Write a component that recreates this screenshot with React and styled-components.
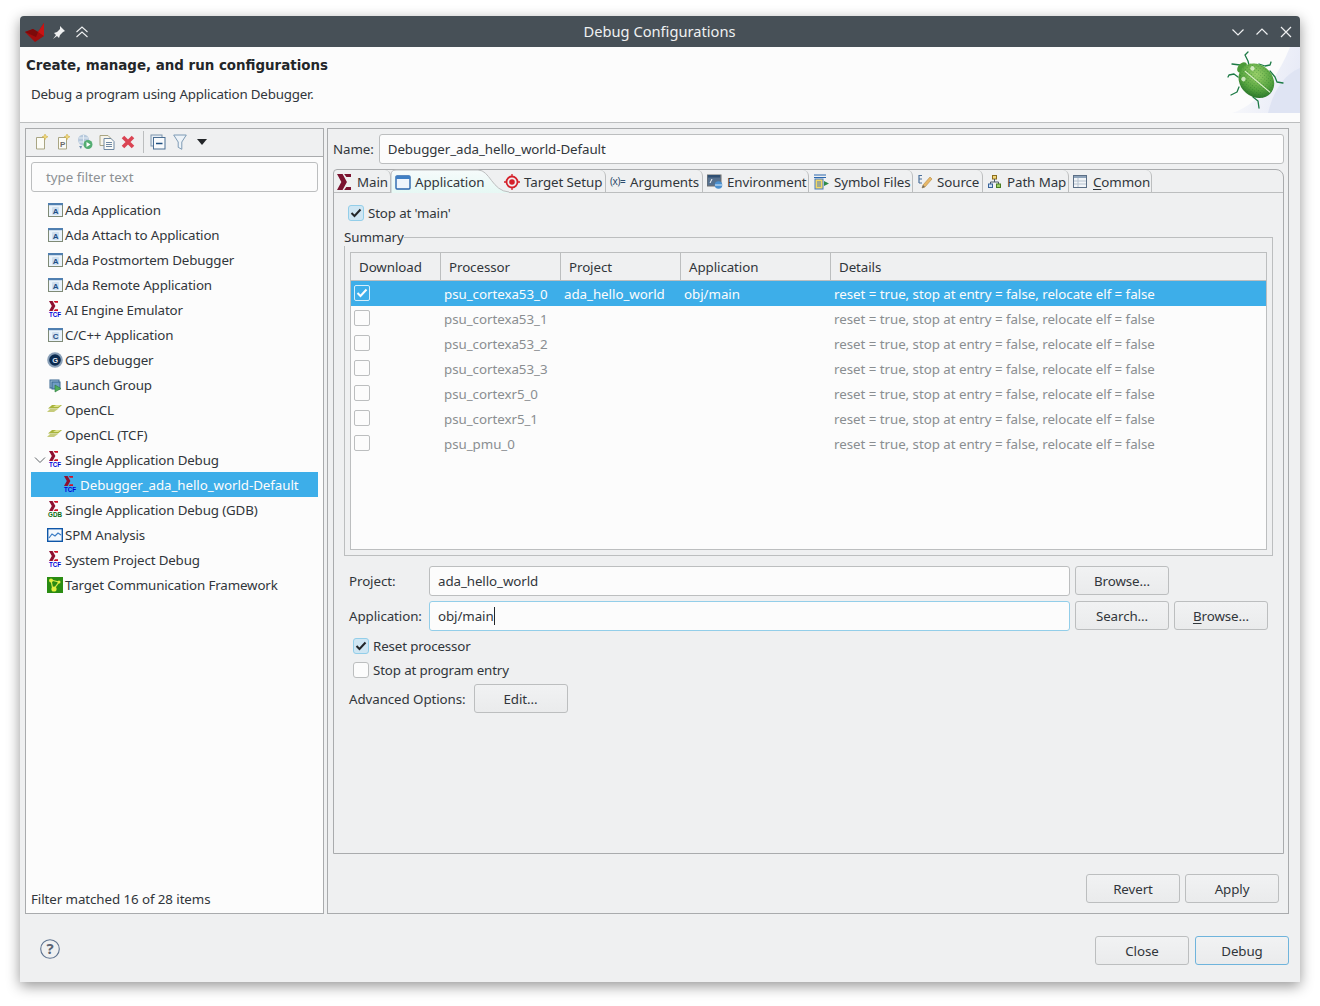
import React from "react";
import styled, { createGlobalStyle } from "styled-components";

const GlobalStyle = createGlobalStyle`
  html, body {
    margin: 0;
    height: 100%;
    overflow: hidden;
    background: #fff;
  }
  body {
    font-family: "Noto Sans", "Open Sans", sans-serif;
    font-size: 13.33px;
    letter-spacing: -0.08px;
    color: #31363b;
  }
  * { box-sizing: border-box; }
`;

const Page = styled.div`
  padding: 16px 20px 0;
`;

const Win = styled.div`
  width: 1280px;
  height: 966px;
  display: flex;
  flex-direction: column;
  background: #eff0f1;
  border-radius: 4px 4px 0 0;
  box-shadow: 0 4px 14px rgba(0, 0, 0, 0.42);
`;

const TitleBar = styled.div`
  height: 31px;
  flex: none;
  display: flex;
  align-items: center;
  background: #475057;
  border-radius: 4px 4px 0 0;
  padding: 0 6px 0 5px;
  color: #eff0f1;
  font-size: 14.67px;
  letter-spacing: 0;
`;

const TitleLeft = styled.div`
  width: 240px;
  display: flex;
  align-items: center;
  gap: 5px;
`;

const TitleText = styled.div`
  flex: 1;
  text-align: center;
  padding-bottom: 2px;
`;

const TitleRight = styled.div`
  width: 240px;
  display: flex;
  justify-content: flex-end;
  align-items: center;
  gap: 8px;
`;

const Header = styled.div`
  height: 76px;
  flex: none;
  background: #fcfcfc;
  border-bottom: 1px solid #bcbebf;
  display: flex;
  justify-content: space-between;
`;

const HeaderText = styled.div`
  padding: 9px 0 0 6px;
`;

const HeaderTitle = styled.div`
  font-family: "DejaVu Sans", sans-serif;
  font-weight: 700;
  font-size: 13.4px;
  letter-spacing: 0;
  line-height: 20px;
  color: #232629;
`;

const HeaderDesc = styled.div`
  margin: 8px 0 0 5px;
  line-height: 20px;
  letter-spacing: -0.19px;
  color: #31363b;
`;

const Body = styled.div`
  flex: 1;
  min-height: 0;
  display: flex;
  gap: 3px;
  padding: 5px 11px 0 5px;
`;

const LeftPanel = styled.div`
  width: 299px;
  flex: none;
  display: flex;
  flex-direction: column;
  background: #fcfcfc;
  border: 1px solid #a9abad;
`;

const Toolbar = styled.div`
  height: 28px;
  flex: none;
  display: flex;
  align-items: center;
  gap: 5.5px;
  padding: 0 0 1px 8px;
  background: #eff0f1;
  border-bottom: 1px solid #a9abad;
`;

const ToolSep = styled.div`
  width: 1px;
  height: 22px;
  background: #bcbebf;
  margin: 0 1px;
`;

const FilterBox = styled.div`
  height: 30px;
  flex: none;
  margin: 5px 5px 5px;
  padding: 0 14px;
  display: flex;
  align-items: center;
  background: #fcfcfc;
  border: 1px solid #bcbebf;
  border-radius: 3px;
  letter-spacing: 0;
  color: #8d9194;
`;

const Tree = styled.div`
  flex: 1;
  padding: 0 5px;
`;

const TreeRow = styled.div`
  height: 25px;
  display: flex;
  align-items: center;
  gap: 2px;
  position: relative;
  padding-left: ${(p) => 16 + p.$depth * 15}px;
  letter-spacing: ${(p) => (p.$selected ? -0.06 : -0.14)}px;
  background: ${(p) => (p.$selected ? "#3daee9" : "transparent")};
  color: ${(p) => (p.$selected ? "#fcfcfc" : "#31363b")};
  & > svg:first-child { flex: none; }
`;

const Twisty = styled.span`
  position: absolute;
  left: 3px;
  top: 7px;
  display: flex;
`;

const FilterCount = styled.div`
  padding: 0 5px;
  height: 26px;
  flex: none;
  line-height: 24px;
`;

const RightPanel = styled.div`
  flex: 1;
  min-width: 0;
  display: flex;
  flex-direction: column;
  border: 1px solid #a9abad;
  padding: 5px 4px 10px 5px;
`;

const NameRow = styled.div`
  display: flex;
  align-items: center;
  gap: 5px;
  height: 30px;
  flex: none;
`;

const TextBox = styled.div`
  height: 30px;
  flex: 1;
  min-width: 0;
  display: flex;
  align-items: center;
  padding: 0 8px;
  background: #fcfcfc;
  border: 1px solid ${(p) => (p.$focus ? "#93cee9" : "#bcbebf")};
  border-radius: 3px;
  color: #31363b;
`;

const Caret = styled.span`
  width: 1px;
  height: 18px;
  background: #232629;
`;

const Folder = styled.div`
  flex: 1;
  min-height: 0;
  margin-top: 5px;
  display: flex;
  flex-direction: column;
  border: 1px solid #a9abad;
  border-radius: 4px 8px 0 0;
`;

const TabStrip = styled.div`
  height: 23px;
  flex: none;
  display: flex;
  border-bottom: 1px solid #bcbebf;
`;

const Tab = styled.div`
  width: ${(p) => p.$w}px;
  flex: none;
  position: relative;
  display: flex;
  align-items: center;
  gap: 4px;
  padding-left: ${(p) => p.$pad}px;
  padding-top: 2px;
  white-space: nowrap;
  border-right: ${(p) => (p.$plain ? "none" : "1px solid #bcbebf")};
  border-top-right-radius: 6px;
  & > * { position: relative; }
  & > svg { flex: none; }
`;

const TabShape = styled.svg`
  position: absolute !important;
  left: -1px;
  top: -1px;
  width: 122px;
  height: 24px;
`;

const Underlined = styled.span`
  text-decoration: underline;
  text-underline-offset: 2px;
`;

const Pane = styled.div`
  flex: 1;
  min-height: 0;
  padding: 8px 10px 0;
`;

const CheckRow = styled.label`
  height: 24px;
  display: flex;
  align-items: center;
  gap: 4px;
  margin-left: 4px;
  letter-spacing: -0.14px;
`;

const Box = styled.span`
  width: 16px;
  height: 16px;
  flex: none;
  display: flex;
  align-items: center;
  justify-content: center;
  border-radius: 3px;
  border: 1px solid ${(p) => (p.$on ? "#93cee9" : "#bcbebf")};
  background: ${(p) => (p.$on ? "#cfe6f3" : "#fcfcfc")};
`;

const Group = styled.fieldset`
  margin: 3px 0 0;
  padding: 6px 5px 5px;
  border: 1px solid #bcbebf;
  height: 328px;
  min-width: 0;
`;

const Legend = styled.legend`
  margin-left: -6px;
  padding: 0;
  line-height: 18px;
`;

const Table = styled.div`
  height: 298px;
  background: #fcfcfc;
  border: 1px solid #bcbebf;
`;

const Columns = "90px 120px 120px 150px 1fr";

const HeadRow = styled.div`
  display: grid;
  grid-template-columns: ${Columns};
  height: 28px;
  border-bottom: 1px solid #bcbebf;
  background: #eff0f1;
`;

const HeadCell = styled.div`
  display: flex;
  align-items: center;
  padding-left: 8px;
  border-right: ${(p) => (p.$last ? "none" : "1px solid #bcbebf")};
`;

const DataRow = styled.div`
  display: grid;
  grid-template-columns: ${Columns};
  height: 25px;
  letter-spacing: -0.04px;
  background: ${(p) => (p.$selected ? "#3daee9" : "transparent")};
  color: ${(p) => (p.$selected ? "#fcfcfc" : "#8a8e91")};
`;

const DataCell = styled.div`
  display: flex;
  align-items: center;
  padding-left: 3px;
`;

const CellBox = styled.span`
  width: 16px;
  height: 16px;
  display: flex;
  align-items: center;
  justify-content: center;
  border-radius: 2px;
  border: 1px solid ${(p) => (p.$on ? "#d4eefb" : "#bcbebf")};
  margin-top: -2px;
`;

const FormGrid = styled.div`
  display: grid;
  grid-template-columns: 75px 641px 94px 94px;
  column-gap: 5px;
  row-gap: 5px;
  margin: 10px 0 0;
  padding: 0 5px;
  align-items: center;
`;

const Btn = styled.div`
  width: 94px;
  height: 29px;
  flex: none;
  align-self: start;
  display: flex;
  align-items: center;
  justify-content: center;
  background: linear-gradient(#f1f2f3, #eaebec);
  border: 1px solid ${(p) => (p.$def ? "#6fb4dc" : "#bcbebf")};
  border-radius: 3px;
  color: #31363b;
`;

const Checks = styled.div`
  margin: 3px 0 0 5px;
`;

const AdvancedRow = styled.div`
  display: flex;
  align-items: center;
  gap: 8px;
  margin: 2px 0 0 5px;
`;

const PanelButtons = styled.div`
  display: flex;
  justify-content: flex-end;
  gap: 5px;
  flex: none;
  margin-top: 20px;
  padding-right: 5px;
`;

const BottomBar = styled.div`
  height: 68px;
  flex: none;
  display: flex;
  align-items: flex-start;
  justify-content: space-between;
  padding: 22px 11px 0 20px;
`;

const HelpWrap = styled.div`
  display: flex;
  padding-top: 3px;
`;

const BottomButtons = styled.div`
  display: flex;
  gap: 6px;
`;

const Svg = ({ w = 16, h = 16, vb, children }) => (
  <svg width={w} height={h} viewBox={vb || `0 0 ${w} ${h}`} fill="none">{children}</svg>
);

const CHEVRON = "M0 0h3.6L6.4 5 3.6 10H0l2.8-5z";
const TIPS = "M4.6 0H9V1.8H6zM4.6 10H9V8.2H6z";

const Tiny = styled.text`
  font-family: "Liberation Sans", sans-serif;
  font-weight: 700;
  font-size: ${(p) => p.$size || 7}px;
  letter-spacing: 0;
`;

const SigmaMark = () => (
  <g transform="translate(2 0)">
    <path d={CHEVRON} fill="#8e1030" />
    <path d={TIPS} fill="#d01028" />
  </g>
);

const TcfIcon = () => (
  <Svg w={16} h={18}>
    <SigmaMark />
    <Tiny x="2" y="16" fill="#0000d8" textLength="12" lengthAdjust="spacingAndGlyphs">TCF</Tiny>
  </Svg>
);

const GdbIcon = () => (
  <Svg w={16} h={18}>
    <SigmaMark />
    <Tiny x="1" y="16" fill="#0b6b10" textLength="14" lengthAdjust="spacingAndGlyphs">GDB</Tiny>
  </Svg>
);

const LetterWin = ({ l }) => (
  <Svg>
    <rect x="1.5" y="1.5" width="14" height="13" fill="#eaf3fb" stroke="#7f8a76" />
    <rect x="1" y="1" width="15" height="2.2" fill="#4f7fb0" />
    <rect x="5" y="5" width="7" height="8" rx="1" fill="#cfdfee" />
    <Tiny x="5.7" y="11.8" $size={8} fill="#1d4d86">{l}</Tiny>
  </Svg>
);

const GpsIcon = () => (
  <Svg>
    <circle cx="8" cy="8" r="7.8" fill="#8aa0b8" />
    <circle cx="8" cy="8" r="5.8" fill="#0a2a50" />
    <Tiny x="5.2" y="10.6" $size={7.5} fill="#e8eef5">G</Tiny>
  </Svg>
);

const LaunchIcon = () => (
  <Svg>
    <rect x="3" y="3" width="9" height="8" fill="#9fc0dc" stroke="#39678f" />
    <rect x="5" y="5" width="8" height="7" fill="#6f9cc4" stroke="#39678f" />
    <path d="M8 8v7l6-3.5z" fill="#4eae5c" stroke="#2c7a3b" strokeWidth=".6" />
  </Svg>
);

const OpenClIcon = () => (
  <Svg>
    <path d="M5 3h10l-4 3.5H1z" fill="#a8b43c" />
    <path d="M3 7h8l-4 3H0z" fill="#c6cb7b" />
    <path d="M9 3h5l-3 2H6z" fill="#dfe38f" />
  </Svg>
);

const SpmIcon = () => (
  <Svg>
    <rect x=".7" y="1.7" width="14.6" height="12.6" fill="#f4f8fd" stroke="#0e56a8" strokeWidth="1.4" />
    <path d="M2 11l3-4 3 2 3-3 3 2" stroke="#3b7cc4" strokeWidth="1.2" />
  </Svg>
);

const TcfFrameworkIcon = () => (
  <Svg>
    <rect width="16" height="16" fill="#2a8c12" />
    <path d="M4 3l8 2-6 8zM4 3l2 10" stroke="#d9e84a" strokeWidth="1.2" />
    <circle cx="4" cy="3.5" r="2" fill="#e3ee3f" />
    <circle cx="12" cy="5" r="1.5" fill="#e3ee3f" />
    <circle cx="7" cy="12" r="2.6" fill="#e3ee3f" />
  </Svg>
);

const ICONS = {
  a: <LetterWin l="A" />,
  c: <LetterWin l="C" />,
  tcf: <TcfIcon />,
  gdb: <GdbIcon />,
  gps: <GpsIcon />,
  launch: <LaunchIcon />,
  opencl: <OpenClIcon />,
  spm: <SpmIcon />,
  fw: <TcfFrameworkIcon />
};

const treeItems = [
  ["a", "Ada Application"],
  ["a", "Ada Attach to Application"],
  ["a", "Ada Postmortem Debugger"],
  ["a", "Ada Remote Application"],
  ["tcf", "AI Engine Emulator"],
  ["c", "C/C++ Application"],
  ["gps", "GPS debugger"],
  ["launch", "Launch Group"],
  ["opencl", "OpenCL"],
  ["opencl", "OpenCL (TCF)"],
  ["tcf", "Single Application Debug", { open: true }],
  ["tcf", "Debugger_ada_hello_world-Default", { depth: 1, selected: true }],
  ["gdb", "Single Application Debug (GDB)"],
  ["spm", "SPM Analysis"],
  ["tcf", "System Project Debug"],
  ["fw", "Target Communication Framework"]
];

const details = "reset = true, stop at entry = false, relocate elf = false";
const procs = ["psu_cortexa53_0", "psu_cortexa53_1", "psu_cortexa53_2", "psu_cortexa53_3", "psu_cortexr5_0", "psu_cortexr5_1", "psu_pmu_0"];

const Check = ({ c = "#232629" }) => (
  <svg width="12" height="10" viewBox="0 0 12 10" fill="none">
    <path d="M1.5 5l3 3 6-6.5" stroke={c} strokeWidth="2" />
  </svg>
);

const CheckBox = ({ on, children }) => (
  <CheckRow>
    <Box $on={on}>{on && <Check />}</Box>
    {children}
  </CheckRow>
);

const ToolDoc = ({ p }) => (
  <Svg>
    <path d="M2.5 3.5h8v11.5h-8z" fill="#fcfcf6" stroke="#a9a583" />
    {p && <Tiny x="4" y="13" $size={8} fill="#6b6b6b">P</Tiny>}
    <path d="M11 0l1 2 2 .8-2 .9-1 2-.9-2-2-.9 2-.8z" fill="#efd77a" stroke="#c9a93f" strokeWidth=".5" />
  </Svg>
);

const ToolRun = () => (
  <Svg>
    <circle cx="6.5" cy="6" r="5.5" fill="#b7c9dc" />
    <path d="M2 4h9M2 8h9M6.5 1v10" stroke="#e6eef6" />
    <circle cx="11" cy="10.5" r="4.5" fill="#54ad72" />
    <path d="M9.5 8l4 2.5-4 2.5z" fill="#fff" />
    <path d="M2 12l2 3 1-3z" fill="#6f8fb0" />
  </Svg>
);

const ToolCopy = () => (
  <Svg>
    <path d="M1 1.5h8l3 3v7H1z" fill="#f7f4ea" stroke="#a9a583" />
    <path d="M5 4.5h7l3 3v8H5z" fill="#fbfbf7" stroke="#6f88a3" />
    <path d="M7 8.5h6M7 10.5h6M7 12.5h6" stroke="#6f88a3" />
  </Svg>
);

const ToolDelete = () => (
  <Svg>
    <path d="M3 3l10 10M13 3L3 13" stroke="#da4453" strokeWidth="3.6" />
  </Svg>
);

const ToolCollapse = () => (
  <Svg>
    <rect x="1" y="1" width="11" height="11" fill="#e7eef5" stroke="#7d93ab" />
    <rect x="3.5" y="3.5" width="11.5" height="11.5" fill="#f8fafc" stroke="#4a6e93" />
    <path d="M6 9.5h6.5" stroke="#1f4f80" strokeWidth="1.5" />
  </Svg>
);

const FunnelSlot = styled.span`
  display: flex;
  margin-left: 1px;
`;

const ToolFilter = () => (
  <FunnelSlot>
    <Svg w={14} h={16}>
      <path d="M.7 1h12.6L8.8 8v7.3l-3.6-2V8z" fill="#edf3f8" stroke="#7d9ab4" />
    </Svg>
  </FunnelSlot>
);

const TabX = () => (
  <svg width="16" height="16" viewBox="0 0 10.3 10" fill="none" preserveAspectRatio="none">
    <path d={CHEVRON} fill="#7a1330" />
    <path d={TIPS} fill="#7a1330" />
  </svg>
);

const TabWindow = () => (
  <Svg>
    <rect x="1" y="2" width="14" height="13" rx="1" fill="#eef5fc" stroke="#2a66ad" strokeWidth="1.4" />
    <rect x="1" y="2" width="14" height="3" fill="#3f7fc4" />
  </Svg>
);

const TabTarget = () => (
  <Svg>
    <circle cx="8" cy="8" r="5.5" stroke="#d5202a" strokeWidth="1.8" />
    <circle cx="8" cy="8" r="2.8" fill="#d5202a" />
    <path d="M8 0v3M8 13v3M0 8h3M13 8h3" stroke="#d5202a" strokeWidth="1.3" />
  </Svg>
);

const ArgsGlyph = styled.span`
  width: 16px;
  flex: none;
  font-size: 10px;
  line-height: 12px;
  margin-top: -3px;
  color: #2c4a6b;
  white-space: nowrap;
  letter-spacing: -0.4px;
`;

const TabEnv = () => (
  <Svg>
    <rect x="0" y="1" width="14" height="11" fill="#56718f" stroke="#6c6c6c" />
    <rect x="1" y="1" width="12" height="2.5" fill="#2f4f72" />
    <path d="M3 9l2-4" stroke="#fff" />
    <circle cx="11.5" cy="11" r="3.8" fill="#4a90d0" />
    <path d="M8 11h7" stroke="#dfeefa" />
  </Svg>
);

const TabSymbols = () => (
  <Svg>
    <path d="M0 1h12M0 3.5h12" stroke="#2a66ad" />
    <rect x="1" y="5" width="8" height="10" fill="#f4d866" stroke="#4a7cc0" />
    <path d="M3 8h4M3 10h4M3 12h4" stroke="#4a7cc0" />
    <path d="M10 8v2H8.6h1.4v2l5-2.5-5-2.5z" fill="#2e8b4a" />
  </Svg>
);

const TabSource = () => (
  <Svg>
    <path d="M2 1.5h3M2 1v8M2 5h3M2 9h3" stroke="#4a6f9a" strokeWidth="1.2" />
    <path d="M5 14l1-3 7-8 2 2-7 8z" fill="#e8b869" stroke="#b5893e" strokeWidth=".6" />
    <path d="M5 14l1-3 2 2z" fill="#6b6b6b" />
  </Svg>
);

const TabPath = () => (
  <Svg>
    <rect x="5.5" y="1.5" width="4" height="3.5" fill="#f3d77a" stroke="#8a6d1e" />
    <path d="M7.5 5v3M3.5 10V8h8v2" stroke="#4a5a6b" />
    <rect x="1.5" y="10" width="4" height="3.5" fill="#cfe0f4" stroke="#38639a" />
    <rect x="9.5" y="10" width="4" height="3.5" fill="#9bd06a" stroke="#4a7d22" />
  </Svg>
);

const TabCommon = () => (
  <Svg>
    <rect x=".5" y="1.5" width="13" height="12" fill="#f2f5f8" stroke="#5c6f86" />
    <rect x="1" y="2" width="12" height="2" fill="#8ea3ba" />
    <path d="M1 7h12M1 10h12M5 4v9" stroke="#b6c2cf" />
  </Svg>
);

const BugLogo = () => (
  <svg width="76" height="66" viewBox="0 0 76 66" fill="none">
    <defs>
      <linearGradient id="swoosh" x1="0" y1="0" x2="1" y2=".3">
        <stop offset="0" stopColor="#fcfcfc" />
        <stop offset="1" stopColor="#e8ebf7" />
      </linearGradient>
      <radialGradient id="shell" cx=".4" cy=".35" r=".75">
        <stop offset="0" stopColor="#9ad06a" />
        <stop offset=".6" stopColor="#55a33e" />
        <stop offset="1" stopColor="#1f6b26" />
      </radialGradient>
      <pattern id="pits" width="2.6" height="2.6" patternUnits="userSpaceOnUse">
        <circle cx="1.3" cy="1.3" r=".45" fill="#1d6a2a" opacity=".55" />
      </pattern>
    </defs>
    <path d="M8 66C34 58 54 30 66 0H76V66z" fill="url(#swoosh)" />
    <path d="M44 66C50 42 60 28 76 21V66z" fill="#dfe4f3" />
    <g stroke="#1c7a45" strokeWidth="1.3" strokeLinecap="round" strokeLinejoin="round">
      <path d="M17 23l-1-5-8-1" />
      <path d="M25 18l-1-4-3-6 3-3" />
      <path d="M35 17l6 2 5-1 1-3" />
      <path d="M46 24l5 6 2 5 6 1" />
      <path d="M14 30l-4-3-5 1-1 2" />
      <path d="M15 40l-2 5-6 3" />
      <path d="M29 50l5 4 1 7" />
    </g>
    <g transform="translate(-2 0) rotate(40 35 33)">
      <ellipse cx="15.5" cy="33" rx="4" ry="6" fill="#4b9a38" />
      <ellipse cx="35" cy="34" rx="19" ry="16" fill="url(#shell)" />
      <ellipse cx="35" cy="34" rx="19" ry="16" fill="url(#pits)" />
      <path d="M20 34h33" stroke="#dff2d0" strokeWidth="1.1" />
      <circle cx="24" cy="27" r="2.2" fill="#e6f5d8" opacity=".8" />
      <circle cx="24" cy="41" r="2.2" fill="#e6f5d8" opacity=".8" />
    </g>
  </svg>
);

const App = () => (
  <>
    <GlobalStyle />
    <Page>
      <Win>
        <TitleBar>
          <TitleLeft>
            <svg width="20" height="20" viewBox="0 0 20 20">
              <path d="M0 10l8-3 5 3 6-9 0 13-9 6z" fill="#a10d0d" />
              <path d="M0 10l8-3 5 3-2 5z" fill="#7c0a0a" />
              <path d="M13 10l6-9v13z" fill="#c91414" />
            </svg>
            <Svg w={19} h={16}>
              <path d="M9 2l5 5-2 1-3 3-1 3-2-2-4 3 3-4-2-2 3-1 3-3z" fill="#eff0f1" transform="translate(1 0)" />
            </Svg>
            <Svg w={16} h={16}>
              <path d="M2.5 8l5.5-5 5.5 5M2.5 13l5.5-5 5.5 5" stroke="#eff0f1" strokeWidth="1.1" />
            </Svg>
          </TitleLeft>
          <TitleText>Debug Configurations</TitleText>
          <TitleRight>
            <Svg>
              <path d="M2.5 5.5L8 11l5.5-5.5" stroke="#eff0f1" strokeWidth="1.2" />
            </Svg>
            <Svg>
              <path d="M2.5 10.5L8 5l5.5 5.5" stroke="#eff0f1" strokeWidth="1.2" />
            </Svg>
            <Svg>
              <path d="M3 3l10 10M13 3L3 13" stroke="#eff0f1" strokeWidth="1.2" />
            </Svg>
          </TitleRight>
        </TitleBar>
        <Header>
          <HeaderText>
            <HeaderTitle>Create, manage, and run configurations</HeaderTitle>
            <HeaderDesc>Debug a program using Application Debugger.</HeaderDesc>
          </HeaderText>
          <BugLogo />
        </Header>
        <Body>
          <LeftPanel>
            <Toolbar>
              <ToolDoc />
              <ToolDoc p />
              <ToolRun />
              <ToolCopy />
              <ToolDelete />
              <ToolSep />
              <ToolCollapse />
              <ToolFilter />
              <svg width="10" height="6" viewBox="0 0 10 6" style={{ marginLeft: 5 }}>
                <path d="M0 0h10L5 6z" fill="#232629" />
              </svg>
            </Toolbar>
            <FilterBox>type filter text</FilterBox>
            <Tree>
              {treeItems.map(([icon, label, opts = {}]) => (
                <TreeRow key={label} $depth={opts.depth || 0} $selected={opts.selected}>
                  {opts.open && (
                    <Twisty>
                      <svg width="12" height="12" viewBox="0 0 12 12" fill="none">
                        <path d="M1 3.5l5 5 5-5" stroke="#5f6468" />
                      </svg>
                    </Twisty>
                  )}
                  {ICONS[icon]}
                  <span>{label}</span>
                </TreeRow>
              ))}
            </Tree>
            <FilterCount>Filter matched 16 of 28 items</FilterCount>
          </LeftPanel>
          <RightPanel>
            <NameRow>
              <span>Name:</span>
              <TextBox>Debugger_ada_hello_world-Default</TextBox>
            </NameRow>
            <Folder>
              <TabStrip>
                <Tab $w={57} $pad={3}><TabX /><span>Main</span></Tab>
                <Tab $w={112} $pad={4} $plain>
                  <TabShape viewBox="0 0 122 24" fill="none">
                    <defs>
                      <linearGradient id="tabfill" x1="0" y1="0" x2="0" y2="1">
                        <stop offset="0" stopColor="#f6fbfb" />
                        <stop offset="1" stopColor="#e6f8f4" />
                      </linearGradient>
                    </defs>
                    <path d="M1 24V6Q1 1 6 1H88C100 1 102 22 119 23V24z" fill="url(#tabfill)" />
                    <path d="M1 24V6Q1 1 6 1H88C100 1 102 22 119 23" stroke="#bcbebf" />
                  </TabShape>
                  <TabWindow />
                  <span>Application</span>
                </Tab>
                <Tab $w={103} $pad={1}><TabTarget /><span>Target Setup</span></Tab>
                <Tab $w={97} $pad={4}><ArgsGlyph>(x)=</ArgsGlyph><span>Arguments</span></Tab>
                <Tab $w={106} $pad={4}><TabEnv /><span>Environment</span></Tab>
                <Tab $w={104} $pad={5}><TabSymbols /><span>Symbol Files</span></Tab>
                <Tab $w={70} $pad={4}><TabSource /><span>Source</span></Tab>
                <Tab $w={86} $pad={4}><TabPath /><span>Path Map</span></Tab>
                <Tab $w={83} $pad={4}><TabCommon /><span><Underlined>C</Underlined>ommon</span></Tab>
              </TabStrip>
              <Pane>
                <CheckBox on>Stop at 'main'</CheckBox>
                <Group>
                  <Legend>Summary</Legend>
                  <Table>
                    <HeadRow>
                      <HeadCell>Download</HeadCell>
                      <HeadCell>Processor</HeadCell>
                      <HeadCell>Project</HeadCell>
                      <HeadCell>Application</HeadCell>
                      <HeadCell $last>Details</HeadCell>
                    </HeadRow>
                    {procs.map((p, i) => (
                      <DataRow key={p} $selected={i === 0}>
                        <DataCell>
                          <CellBox $on={i === 0}>{i === 0 && <Check c="#fcfcfc" />}</CellBox>
                        </DataCell>
                        <DataCell>{p}</DataCell>
                        <DataCell>{i === 0 && "ada_hello_world"}</DataCell>
                        <DataCell>{i === 0 && "obj/main"}</DataCell>
                        <DataCell>{details}</DataCell>
                      </DataRow>
                    ))}
                  </Table>
                </Group>
                <FormGrid>
                  <span>Project:</span>
                  <TextBox>ada_hello_world</TextBox>
                  <Btn>Browse...</Btn>
                  <span />
                  <span>Application:</span>
                  <TextBox $focus>obj/main<Caret /></TextBox>
                  <Btn>Search...</Btn>
                  <Btn><span><Underlined>B</Underlined>rowse...</span></Btn>
                </FormGrid>
                <Checks>
                  <CheckBox on>Reset processor</CheckBox>
                  <CheckBox>Stop at program entry</CheckBox>
                </Checks>
                <AdvancedRow>
                  <span>Advanced Options:</span>
                  <Btn>Edit...</Btn>
                </AdvancedRow>
              </Pane>
            </Folder>
            <PanelButtons>
              <Btn>Revert</Btn>
              <Btn>Apply</Btn>
            </PanelButtons>
          </RightPanel>
        </Body>
        <BottomBar>
          <HelpWrap>
            <svg width="20" height="20" viewBox="0 0 20 20" fill="none">
              <circle cx="10" cy="10" r="9.3" stroke="#5e7390" strokeWidth="1.1" />
              <text x="10" y="15.2" textAnchor="middle" fontFamily="Noto Sans, sans-serif" fontWeight="700" fontSize="15" fill="#5a6474">?</text>
            </svg>
          </HelpWrap>
          <BottomButtons>
            <Btn>Close</Btn>
            <Btn $def>Debug</Btn>
          </BottomButtons>
        </BottomBar>
      </Win>
    </Page>
  </>
);

export default App;
